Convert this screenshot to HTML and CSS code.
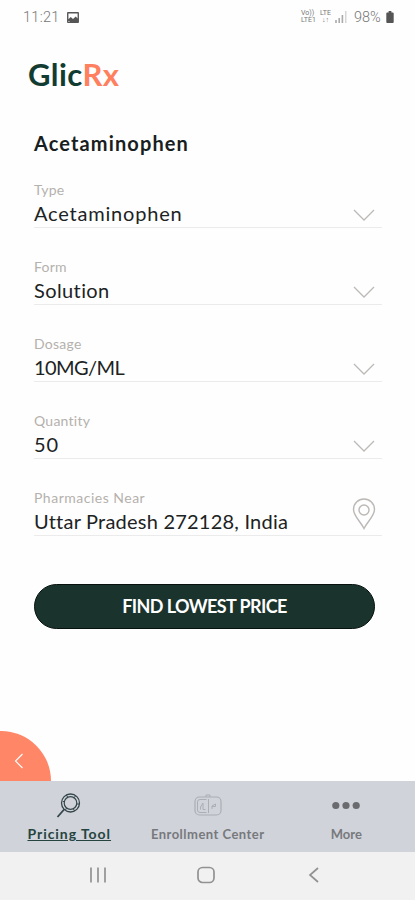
FILE: index.html
```html
<!DOCTYPE html>
<html lang="en">
<head>
<meta charset="utf-8">
<meta name="viewport" content="width=device-width, initial-scale=1">
<title>GlicRx</title>
<link rel="stylesheet" href="styles.css">
</head>
<body>
<div class="screen">
  <header class="status">
    <span class="time">11:21</span>
    <svg class="picture" width="12" height="11" viewBox="0 0 13 12"><path fill="#555" fill-rule="evenodd" d="M1 0H12Q13 0 13 1V11Q13 12 12 12H1Q0 12 0 11V1Q0 0 1 0ZM1.5 1.5V8L4 5.5L6.5 7.5L9.5 5L11.5 7V1.5ZM1.5 9.5V10.5H3.5Z"/></svg>
    <span class="lte"><span>Vo))</span><span>LTE1</span></span>
    <span class="lte arrows"><span>LTE</span><span class="updown">↓↑</span></span>
    <svg class="signal" width="12" height="12" viewBox="0 0 12 12"><path stroke="#aaa" stroke-width="1.6" d="M1 12V9M4.2 12V7M7.4 12V4"/><path stroke="#ccc" stroke-width="1.2" d="M10.8 12V0"/></svg>
    <span class="percent">98%</span>
    <svg class="battery" width="8" height="12" viewBox="0 0 8 13"><path fill="#555" d="M2.5 0H5.5V1.5H7Q8 1.5 8 2.5V12Q8 13 7 13H1Q0 13 0 12V2.5Q0 1.5 1 1.5H2.5Z"/></svg>
  </header>
  <main class="content">
    <div class="logo">Glic<span class="rx">Rx</span></div>
    <h1 class="title">Acetaminophen</h1>
    <section class="field">
      <div class="label">Type</div>
      <div class="value v-type">Acetaminophen</div>
      <svg class="chevron" width="22" height="12" viewBox="0 0 22 12"><path d="M1 1L11 11L21 1"/></svg>
    </section>
    <section class="field">
      <div class="label">Form</div>
      <div class="value v-form">Solution</div>
      <svg class="chevron" width="22" height="12" viewBox="0 0 22 12"><path d="M1 1L11 11L21 1"/></svg>
    </section>
    <section class="field">
      <div class="label">Dosage</div>
      <div class="value v-dosage">10MG/ML</div>
      <svg class="chevron" width="22" height="12" viewBox="0 0 22 12"><path d="M1 1L11 11L21 1"/></svg>
    </section>
    <section class="field">
      <div class="label">Quantity</div>
      <div class="value v-quantity">50</div>
      <svg class="chevron" width="22" height="12" viewBox="0 0 22 12"><path d="M1 1L11 11L21 1"/></svg>
    </section>
    <section class="field">
      <div class="label l-near">Pharmacies Near</div>
      <div class="value v-near">Uttar Pradesh 272128, India</div>
      <svg class="pin" width="24" height="32" viewBox="0 0 24 32"><path d="M12 30.5C9 24 1.5 18 1.5 11.5A10.5 10.5 0 0 1 22.5 11.5C22.5 18 15 24 12 30.5Z"/><circle cx="12" cy="12" r="5"/></svg>
    </section>
    <button class="find"><span>FIND LOWEST PRICE</span></button>
    <div class="back"><svg width="10" height="16" viewBox="0 0 10 16"><path d="M8.5 1L1.5 8L8.5 15"/></svg></div>
  </main>
  <nav class="tabs">
    <div class="tab active">
      <svg width="26" height="28" viewBox="0 0 26 28" fill="none" stroke="#34464a"><circle cx="14.5" cy="11" r="9" stroke-width="1.3"/><circle cx="14.5" cy="11" r="6.3" stroke-width="1.2"/><path stroke-width="1" d="M10.5 3L11.5 5M19.5 4L17.5 6M23.5 12H20.5M18.5 19L17.5 17M6.5 9L8.5 10M9.5 18L10.5 16"/><path stroke-width="1.8" d="M8.5 17L1.5 25"/></svg>
      <span class="t-price">Pricing Tool</span>
    </div>
    <div class="tab">
      <svg width="30" height="28" viewBox="0 0 30 28" fill="none" stroke="#abaeb3"><rect x="2" y="5" width="26" height="18" rx="4.5" stroke-width="1.2"/><path d="M13.5 7.5H7Q4.500 7.500 4.500 10V18Q4.500 20.500 7 20.500H13.500M15.500 7V21M13 5V3H17V5M7.500 17.500V15L10 11V17.500H12.500M19 17V14L22.500 12V14.500H19"/></svg>
      <span class="t-enroll">Enrollment Center</span>
    </div>
    <div class="tab">
      <svg width="30" height="28" viewBox="0 0 30 28" fill="#696b6e"><circle cx="4.8" cy="13.500" r="3.600"/><circle cx="15" cy="13.500" r="3.600"/><circle cx="25.200" cy="13.500" r="3.600"/></svg>
      <span class="t-more">More</span>
    </div>
  </nav>
  <footer class="system">
    <svg width="18" height="18" viewBox="0 0 18 18"><path d="M2 1.500V16.500M9 1.500V16.500M16 1.500V16.500"/></svg>
    <svg width="18" height="18" viewBox="0 0 18 18"><rect x="1" y="1.500" width="16" height="15" rx="4.500"/></svg>
    <svg width="18" height="18" viewBox="0 0 18 18"><path d="M13 2L5 9L13 16"/></svg>
  </footer>
</div>
</body>
</html>
```
FILE: styles.css
```css
* { box-sizing: border-box; }
body { margin: 0; background: #fefefe; font-family: Lato, "Liberation Sans", sans-serif; }
.screen { width: 415px; height: 900px; display: flex; flex-direction: column; overflow: hidden; }
.status { height: 36px; flex: none; display: flex; align-items: center; padding: 0 21px 2px 23px; color: #777; font-family: Roboto, sans-serif; }
.time { font-size: 14.5px; width: 44px; font-weight: 300; letter-spacing: 0.3px; }
.picture { margin-right: auto; }
.lte { display: flex; flex-direction: column; width: 16px; margin-right: 2px; font-size: 7px; line-height: 7px; }
.arrows { width: 13px; margin-right: 3px; align-items: center; }
.updown { font-weight: 700; }
.signal { margin-right: 7px; }
.percent { font-size: 14.5px; font-weight: 300; width: 28px; margin-right: 4px; }
svg { display: block; flex: none; }
.content { position: relative; height: 745px; flex: none; padding: 0 33px 0 34px; }
.logo { height: 78px; line-height: 76px; margin-left: -6px; font-size: 31px; font-weight: 700; color: #123c31; letter-spacing: 0.4px; }
.rx { color: #ff805e; }
.title { margin: 14px 0 22px; font-size: 20px; line-height: 30px; font-weight: 700; color: #18201f; letter-spacing: 1.12px; }
.field { display: grid; grid-template-columns: 1fr 36px; grid-template-rows: 20px 27px; height: 48px; margin-bottom: 29px; border-bottom: 1px solid #ebebeb; }
.label { grid-column: 1 / 3; font-size: 14px; line-height: 20px; color: #b5b1ad; letter-spacing: 0.25px; }
.l-near { letter-spacing: 0.5px; }
.value { font-size: 20px; line-height: 26px; color: #1c2323; white-space: nowrap; }
.v-type { letter-spacing: 0.8px; }
.v-form { letter-spacing: 0.4px; }
.v-dosage { letter-spacing: -0.6px; }
.v-quantity { letter-spacing: 1px; }
.v-near { letter-spacing: 0.22px; }
.chevron { align-self: center; justify-self: center; margin-top: 2px; fill: none; stroke: #bcbab7; stroke-width: 1.3; }
.pin { align-self: end; justify-self: center; margin-bottom: 5px; fill: none; stroke: #bbb8b5; stroke-width: 1.4; }
.find { display: block; width: 341px; height: 45px; margin-top: 48px; padding: 0; border: 1px solid #07110e; border-radius: 23px; background: #1a342d; color: #fff; font: 700 18px/43px Lato, sans-serif; letter-spacing: -0.6px; }
.back { position: absolute; left: 0; bottom: 0; width: 51px; height: 50px; border-radius: 0 51px 0 0; background: #ff8768; display: flex; align-items: center; padding: 10px 0 0 14px; }
.back svg { fill: none; stroke: #fff; stroke-width: 1.1; }
.tabs { height: 71px; flex: none; display: grid; grid-template-columns: repeat(3, 138.5px); background: #d0d3da; color: #77797c; }
.tab { display: flex; flex-direction: column; align-items: center; padding-top: 11px; font-size: 13px; font-weight: 700; line-height: 28px; white-space: nowrap; }
.active { color: #26443f; font-size: 14px; text-decoration: underline; }
.t-price { letter-spacing: 0.95px; }
.t-enroll { letter-spacing: 0.48px; }
.system { height: 48px; flex: none; display: flex; justify-content: space-between; padding: 14px 92px 0 89px; background: #f1f1f1; }
.system svg { fill: none; stroke: #929292; stroke-width: 1.7; }
```
